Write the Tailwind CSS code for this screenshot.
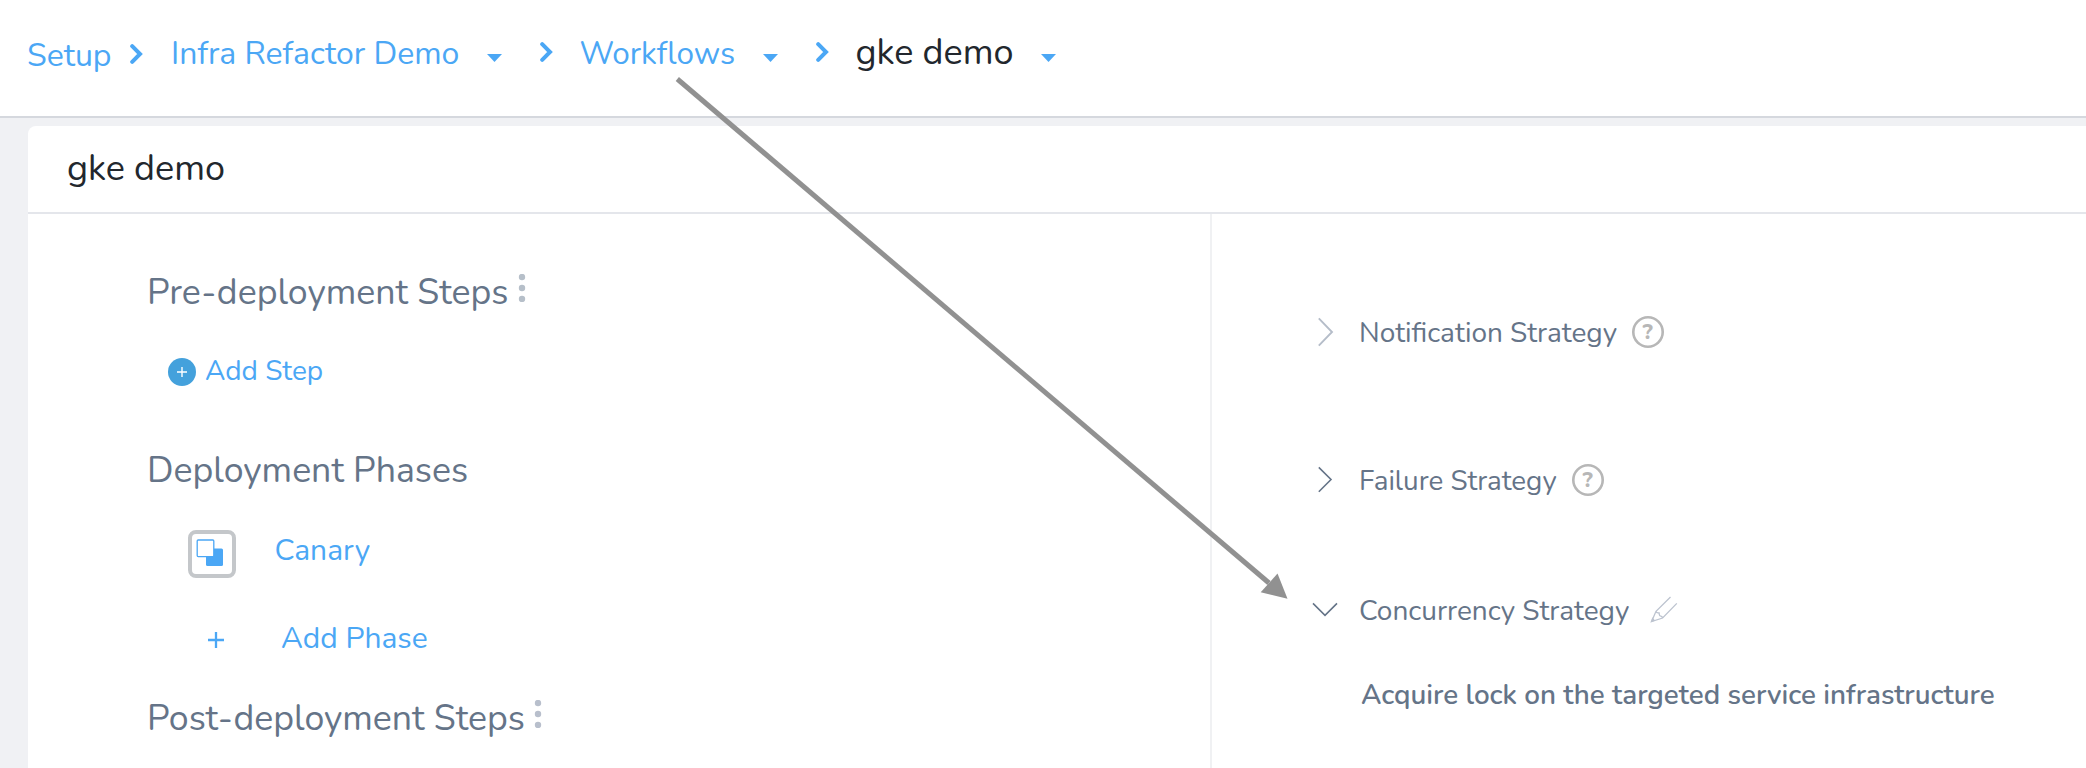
<!DOCTYPE html>
<html lang="en">
<head>
<meta charset="utf-8">
<title>gke demo</title>
<script src="https://cdn.jsdelivr.net/npm/@tailwindcss/browser@4"></script>
</head>
<body class="relative h-[768px] w-[2086px] overflow-hidden bg-[#f0f1f4] font-[Nunito,'Noto_Sans',sans-serif] text-[#657488]">
<header class="h-[118px] border-b-2 border-[#d5d8de] bg-white">
  <nav class="flex items-start pt-8 pl-[27px] text-[32px] leading-[40px] whitespace-nowrap text-[#4ba7f5]">
    <a class="mt-1 w-[102.5px] shrink-0">Setup</a>
    <svg class="mt-3 h-5 w-[13px] shrink-0" viewBox="0 0 13 20" fill="none" stroke="#4ba7f5" stroke-width="4" stroke-linecap="round"><path d="M2.2 2.2 10 10l-7.8 7.8"/></svg>
    <a class="ml-[28.5px] mt-0.5 w-[316px] shrink-0">Infra Refactor Demo</a>
    <svg class="mt-[22px] h-2 w-[15px] shrink-0" viewBox="0 0 15 8" fill="#4ba7f5"><path d="M0 0h15L7.5 8z"/></svg>
    <svg class="ml-[38px] mt-[10px] h-5 w-[13px] shrink-0" viewBox="0 0 13 20" fill="none" stroke="#4ba7f5" stroke-width="4" stroke-linecap="round"><path d="M2.2 2.2 10 10l-7.8 7.8"/></svg>
    <a class="ml-[26.5px] mt-0.5 w-[183px] shrink-0 text-[31.5px] leading-[40px]">Workflows</a>
    <svg class="mt-[22px] h-2 w-[15px] shrink-0" viewBox="0 0 15 8" fill="#4ba7f5"><path d="M0 0h15L7.5 8z"/></svg>
    <svg class="ml-[38.5px] mt-[10px] h-5 w-[13px] shrink-0" viewBox="0 0 13 20" fill="none" stroke="#4ba7f5" stroke-width="4" stroke-linecap="round"><path d="M2.2 2.2 10 10l-7.8 7.8"/></svg>
    <span class="ml-[26.5px] mt-px w-[185px] shrink-0 text-4xl leading-[40px] text-[#22272d]">gke demo</span>
    <svg class="mt-[22px] h-2 w-[15px] shrink-0" viewBox="0 0 15 8" fill="#4ba7f5"><path d="M0 0h15L7.5 8z"/></svg>
  </nav>
</header>
<main class="mt-2 ml-7 flex h-[642px] flex-col rounded-tl-lg bg-white">
  <h1 class="h-[88px] shrink-0 border-b-2 border-[#e4e6eb] pt-[23px] pl-[39px] text-4xl leading-[40px] text-[#22272d]">gke demo</h1>
  <div class="flex grow">
    <section class="w-[1184px] shrink-0 border-r-2 border-[#f0f1f3] pt-[55px] pl-[119px]">
      <h2 class="flex text-[35.7px] leading-[48px]"><span class="w-[371px]">Pre-deployment Steps</span>
        <svg class="mt-[5px] h-[28px] w-2" viewBox="0 0 8 28" fill="#b6bfc9"><circle cx="4" cy="3" r="3.2"/><circle cx="4" cy="14" r="3.2"/><circle cx="4" cy="25" r="3.2"/></svg>
      </h2>
      <a class="mt-[34px] ml-[21px] flex h-10 items-center text-[28px] leading-[40px] text-[#4ba7f5]">
        <svg class="mt-[2px] mr-[9px] h-7 w-7" viewBox="0 0 28 28"><circle cx="14" cy="14" r="14" fill="#44a1dc"/><path d="M9 14h10M14 9v10" stroke="#fff" stroke-width="1.4"/></svg>Add Step</a>
      <h2 class="mt-14 text-[35.7px] leading-[48px]">Deployment Phases</h2>
      <div class="mt-[35px] ml-[41px] flex h-12 items-start text-[30px] leading-[40px] text-[#4ba7f5]">
        <span class="flex h-12 w-12 items-center justify-center rounded-lg border-4 border-[#c4c7ca]">
          <svg class="h-10 w-10 shrink-0" viewBox="0 0 40 40"><rect x="14" y="14.5" width="17" height="17.5" rx="1.5" fill="#4ba7f5"/><rect x="5.2" y="6" width="16.6" height="16.6" rx="1" fill="#fff" stroke="#4ba7f5" stroke-width="1.3"/></svg>
        </span>
        <a class="mt-px ml-[38.5px]">Canary</a>
      </div>
      <div class="mt-[41px] ml-[61px] flex h-10 text-[30px] leading-[40px] text-[#4ba7f5]">
        <svg class="mt-[13px] h-4 w-4" viewBox="0 0 16 16" stroke="#4ba7f5" stroke-width="2.3"><path d="M0 8h16M8 0v16"/></svg>
        <a class="ml-[57px]">Add Phase</a>
      </div>
      <h2 class="mt-9 flex text-[35.7px] leading-[48px]"><span class="w-[387px]">Post-deployment Steps</span>
        <svg class="mt-[5px] h-[28px] w-2" viewBox="0 0 8 28" fill="#b8bfcc"><circle cx="4" cy="3" r="3.2"/><circle cx="4" cy="14" r="3.2"/><circle cx="4" cy="25" r="3.2"/></svg>
      </h2>
    </section>
    <section class="grow pt-[99px] pl-[100px] text-[28px] leading-[40px] whitespace-nowrap">
      <div class="flex h-10">
        <svg class="mt-[4px] mr-[19px] h-[30px] w-7" viewBox="0 0 28 30" fill="none" stroke="#b5bdc9" stroke-width="1.9"><path d="M6.8 1.4 20 15 6.8 28.6"/></svg>
        Notification Strategy
        <span class="mt-[3px] ml-[14.5px] flex h-8 w-8 items-center justify-center rounded-full text-[22px] leading-none font-extrabold text-[#b7b7b7] inset-ring-[2.6px] inset-ring-[#b7b7b7]">?</span>
      </div>
      <div class="mt-[108px] flex h-10">
        <svg class="mt-[4px] mr-[19px] h-[30px] w-7" viewBox="0 0 28 30" fill="none" stroke="#657488" stroke-width="1.6"><path d="M6.8 2.4 19 14.5 6.8 26.8"/></svg>
        <span class="text-[27.8px]">Failure Strategy</span>
        <span class="mt-[3px] ml-[15px] flex h-8 w-8 items-center justify-center rounded-full text-[22px] leading-none font-extrabold text-[#b7b7b7] inset-ring-[2.6px] inset-ring-[#b7b7b7]">?</span>
      </div>
      <div class="mt-[90px] flex h-10">
        <svg class="mt-[4px] mr-[19px] h-[30px] w-7" viewBox="0 0 28 30" fill="none" stroke="#657488" stroke-width="1.6"><path d="M1 8.4 13 20.4 25 8.4"/></svg>
        Concurrency Strategy
        <svg class="mt-[5px] ml-[20.5px] h-7 w-7" viewBox="0 0 28 28" fill="none" stroke="#bcc3cf" stroke-width="1.3"><path d="M20.5 1 6 15.3 1.6 25.5 12.6 22 26.8 7.4M6 15.3c.4 2 1.3 1.6 3 1.5.4 1.4.2 2.7 1.2 3.2 1 .4 2-.2 2.4 2"/><path d="m1.6 25.5 1-3 1.6 2z" fill="#bcc3cf"/></svg>
      </div>
      <p class="mt-11 ml-[49px] text-[27.82px] font-semibold">Acquire lock on the targeted service infrastructure</p>
    </section>
  </div>
</main>
<svg class="pointer-events-none absolute top-0 left-0 h-[768px] w-[2086px]" viewBox="0 0 2086 768"><path d="M677.3 79 1269 583" stroke="#919191" stroke-width="5"/><path d="m1287.5 598.8-10-25.2-16.8 18.6z" fill="#919191"/></svg>
</body>
</html>
